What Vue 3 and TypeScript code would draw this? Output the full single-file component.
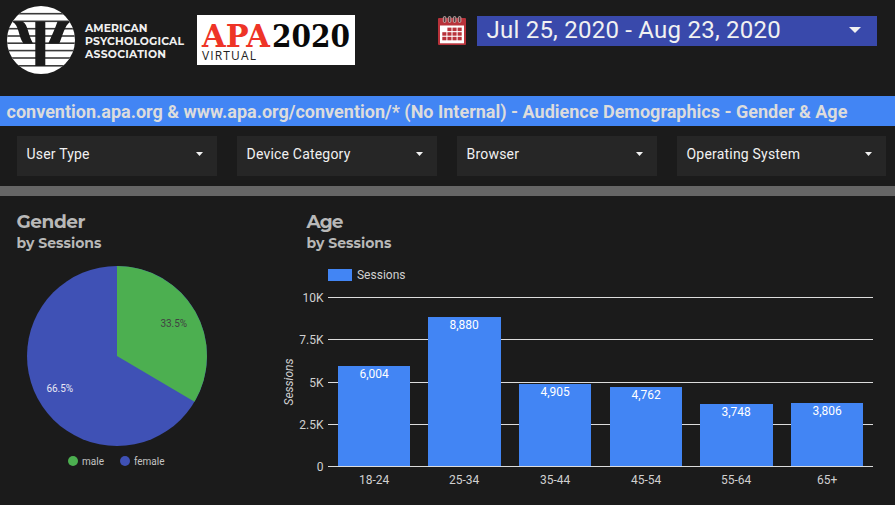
<script setup lang="ts">
interface AgeBar { label: string; value: string; x: number; y: number; w: number }

const filters: string[] = ['User Type', 'Device Category', 'Browser', 'Operating System']
const stripes: number[] = [13.7, 21.3, 28.7, 36, 43.2, 50.6, 58, 65.8]
const ticks = [
  { label: '10K', y: 297 },
  { label: '7.5K', y: 339 },
  { label: '5K', y: 382 },
  { label: '2.5K', y: 424 },
  { label: '0', y: 466 },
]
const bars: AgeBar[] = [
  { label: '18-24', value: '6,004', x: 338, y: 366, w: 72 },
  { label: '25-34', value: '8,880', x: 428, y: 317, w: 73 },
  { label: '35-44', value: '4,905', x: 519, y: 384, w: 72 },
  { label: '45-54', value: '4,762', x: 610, y: 387, w: 72 },
  { label: '55-64', value: '3,748', x: 700, y: 404, w: 73 },
  { label: '65+', value: '3,806', x: 791, y: 403, w: 72 },
]
const dots: { x: number; y: number }[] = []
for (let row = 0; row < 3; row++) {
  for (let col = 0; col < 4; col++) {
    if (row === 0 && col === 0) continue
    dots.push({ x: 4.3 + col * 5.1, y: 11.6 + row * 4.6 })
  }
}
</script>

<template>
  <main class="report">
    <header class="top">
      <svg class="apa-logo" width="190" height="80" viewBox="0 0 190 80">
        <defs>
          <clipPath id="disc"><circle cx="41" cy="40" r="34" /></clipPath>
        </defs>
        <circle cx="41" cy="40" r="34" fill="#fff" />
        <g clip-path="url(#disc)" fill="#1b1b1b">
          <rect v-for="s in stripes" :key="s" x="6" :y="s - 0.8" width="70" height="1.6" fill="#3a3a3a" />
          <path d="M12 21.6H22.500C28.500 25 27.500 34 33 43.500H23.500C18 37 19.500 25 12 21.600Z" />
          <path d="M70.500 21.600H57.500C55 29 51.500 36.500 48.300 43.500H59.300C62.500 37 64 26 70.500 21.600Z" />
          <rect x="35.3" y="21.6" width="10" height="44.4" />
        </g>
        <g class="apa-name">
          <text x="85" y="32" textLength="62.5">AMERICAN</text>
          <text x="85" y="45" textLength="99">PSYCHOLOGICAL</text>
          <text x="85" y="58" textLength="81">ASSOCIATION</text>
        </g>
      </svg>
      <svg class="event-logo" width="158" height="50" viewBox="0 0 158 50">
        <rect width="158" height="50" fill="#fff" />
        <text class="slab red" x="5" y="32" textLength="68" lengthAdjust="spacingAndGlyphs">APA</text>
        <text class="slab" x="75" y="32" textLength="78" lengthAdjust="spacingAndGlyphs">2020</text>
        <text class="virtual" x="5" y="45" textLength="54">VIRTUAL</text>
      </svg>
      <svg class="calendar" width="28" height="30" viewBox="0 0 28 30">
        <rect y="2" width="28" height="27" rx="1" fill="#b8323a" />
        <rect x="2" y="9.5" width="24" height="17.8" fill="#fff" />
        <rect v-for="(d, i) in dots" :key="i" :x="d.x" :y="d.y" width="4.1" height="3.5" fill="#b8323a" />
        <rect v-for="n in 4" :key="n" :x="n * 5 + 0.3" y="0.5" width="2.6" height="6" rx="1.3" fill="#5a3a3c" stroke="#d8c0c0" stroke-width="0.8" />
      </svg>
      <div class="date-range">
        <span>Jul 25, 2020 - Aug 23, 2020</span>
        <svg width="12" height="6" viewBox="0 0 12 6"><path d="M0 0H12L6 6Z" fill="#f1f1f1" /></svg>
      </div>
    </header>

    <h1 class="banner"><span>convention.apa.org &amp; www.apa.org/convention/* (No Internal) - Audience Demographics - Gender &amp; Age</span></h1>

    <nav class="filters">
      <div v-for="f in filters" :key="f" class="filter">
        <span>{{ f }}</span>
        <svg width="7" height="4" viewBox="0 0 7 4"><path d="M0 0H7L3.5 4Z" fill="#f1f1f1" /></svg>
      </div>
    </nav>
    <div class="divider"></div>

    <svg class="charts" width="895" height="309" viewBox="0 196 895 309">
      <g class="heading">
        <text class="title" x="16.500" y="228" textLength="69">Gender</text>
        <text class="subtitle" x="16.500" y="248" textLength="85">by Sessions</text>
        <text class="title" x="306.500" y="228" textLength="37">Age</text>
        <text class="subtitle" x="306.500" y="248" textLength="85">by Sessions</text>
      </g>

      <circle cx="117" cy="356" r="90" fill="#3f51b5" />
      <path d="M117 356V266A90 90 0 0 1 194.500 401.700Z" fill="#4caf50" />
      <g class="pie-text">
        <text x="160.500" y="327" textLength="26.500" fill="#424242">33.5%</text>
        <text x="46.500" y="392" textLength="26.500" fill="#e8e8f4">66.5%</text>
        <circle cx="73" cy="461" r="5" fill="#4caf50" />
        <text x="82" y="465" textLength="22" fill="#c4c4c4">male</text>
        <circle cx="125" cy="461" r="5" fill="#3f51b5" />
        <text x="134" y="465" textLength="30.500" fill="#c4c4c4">female</text>
      </g>

      <rect x="328" y="269" width="24" height="12" fill="#4285f4" />
      <g class="axis">
        <text x="357" y="279" textLength="48.500">Sessions</text>
        <text class="axis-title" transform="translate(293 405.500) rotate(-90)" textLength="47">Sessions</text>
        <g v-for="t in ticks" :key="t.label">
          <rect x="328" :y="t.y" width="545" height="1" fill="#dcdcdc" />
          <text x="323.500" :y="t.y + 5" text-anchor="end">{{ t.label }}</text>
        </g>
        <g v-for="b in bars" :key="b.label">
          <rect :x="b.x" :y="b.y" :width="b.w" :height="466 - b.y" fill="#4285f4" />
          <text class="value" :x="b.x + 36.2" :y="b.y + 12" text-anchor="middle">{{ b.value }}</text>
          <text :x="b.x + 36.2" y="484" text-anchor="middle">{{ b.label }}</text>
        </g>
      </g>
    </svg>
  </main>
</template>

<style>
body { background: #1b1b1b; }
</style>

<style scoped>
.report { width: 895px; height: 505px; overflow: hidden; background: #1b1b1b; font-family: Roboto, sans-serif; }
svg { display: block; flex: none; }
.top { display: flex; align-items: flex-start; height: 96px; }
.apa-name { font: 700 10.8px Montserrat, "Open Sans", sans-serif; fill: #f0f0f0; }
.event-logo { margin: 15px 0 0 7px; }
.slab { font: 700 31px "DejaVu Serif", serif; fill: #090909; }
.slab.red { fill: #ee3427; }
.virtual { font: 12px "Open Sans", sans-serif; fill: #222; }
.calendar { margin: 16px 0 0 83px; }
.date-range { box-sizing: border-box; width: 400px; height: 30px; margin: 16px 0 0 11px; padding: 0 16px 0 9.5px; display: flex; align-items: center; justify-content: space-between; background: #3949ab; color: #f1f1f1; font-size: 24px; line-height: 28px; letter-spacing: .23px; }
.date-range span { padding-bottom: 2px; white-space: nowrap; }
.date-range svg { margin-top: -2px; }
.banner { margin: 0; height: 30px; padding-left: 6.5px; background: #4285f4; color: #dcdcdc; font-size: 18px; line-height: 31px; font-weight: 700; white-space: nowrap; }
.filters { display: grid; grid-template-columns: 200px 200px 200px 209px; gap: 20px; padding: 10px 0 10px 17px; }
.filter { height: 40px; box-sizing: border-box; padding: 0 14px 4px 9.5px; display: flex; align-items: center; justify-content: space-between; background: #262626; color: #f1f1f1; font-size: 14px; letter-spacing: .2px; }
.divider { height: 10px; background: #666; }
.heading { font-family: Montserrat, "Open Sans", sans-serif; font-weight: 700; fill: #b8b8b8; }
.title { font-size: 18.500px; }
.subtitle { font-size: 14px; }
.pie-text { font-size: 10px; }
.axis { font-size: 12px; fill: #d0d0d0; }
.axis-title { font-style: italic; }
.value { fill: #fff; }
</style>
